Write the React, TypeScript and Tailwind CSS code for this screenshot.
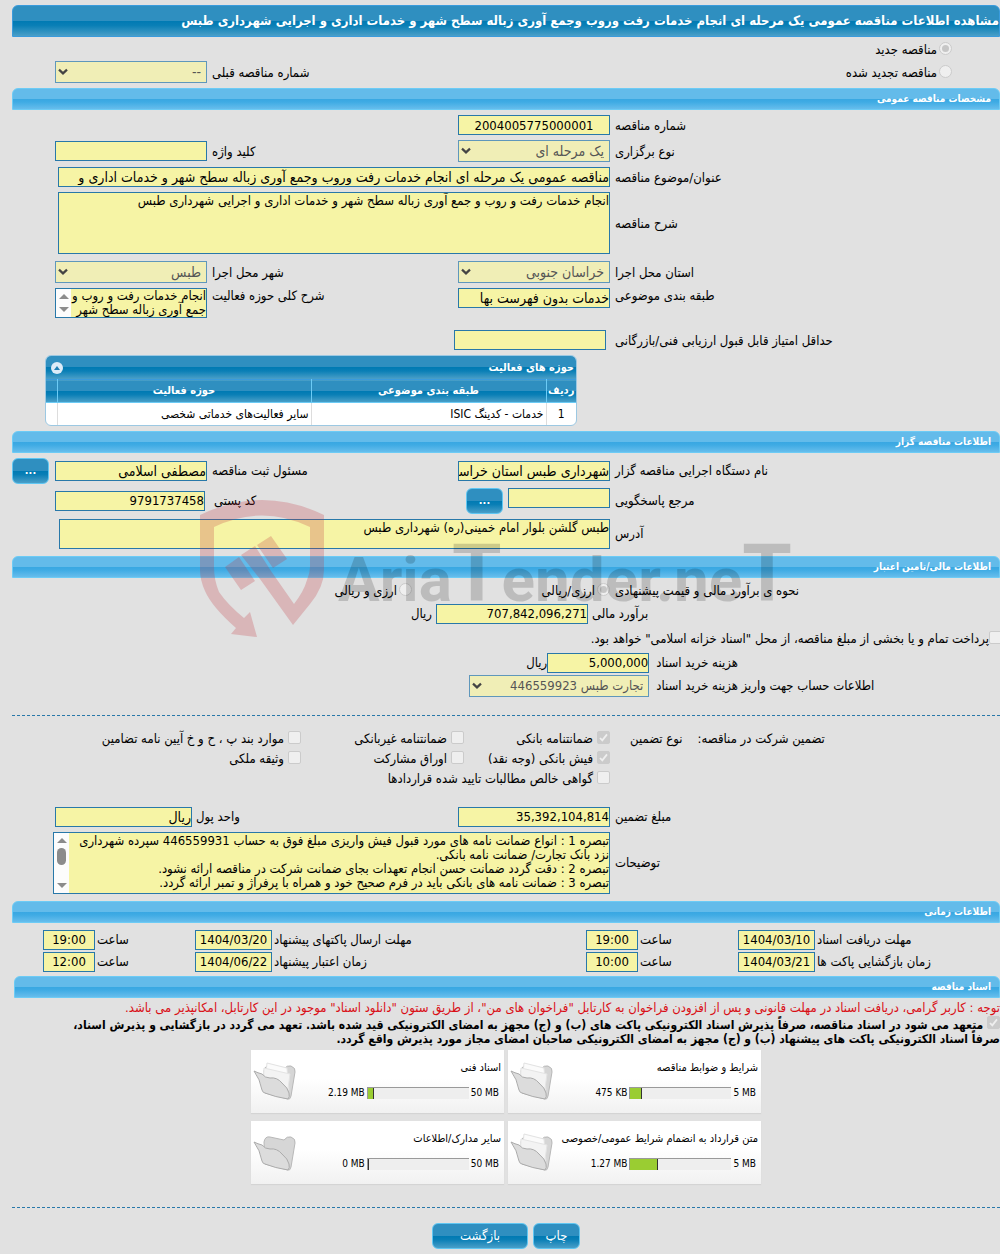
import type { ReactNode } from "react";

const FORM_GRID = "grid grid-cols-[390fr_152px_251fr_152px_43px] items-center";
const DATE_GRID =
  "grid grid-cols-[185fr_77px_100px_52px_314fr_77px_100px_52px_31px] items-center h-5";
const CHECK_GRID = "grid grid-cols-[390fr_146fr_163fr_289fr] items-center h-5";
const DARK =
  "bg-[linear-gradient(#2f8fc0_0%,#2f8fc0_50%,#007ab3_50%,#0a7fb6_65%,#4a9fc8_100%)]";
const LIGHT =
  "bg-[linear-gradient(#63bbea_0%,#63bbea_50%,#38a7e2_50%,#3fabe4_65%,#66bdec_100%)]";
const BOX = "border border-[#2878a9] bg-[#f6f4a5] text-black";

function SectionBar({ title, className = "" }: { title: string; className?: string }) {
  return (
    <h2
      className={`flex h-[22px] items-center rounded-t-md border border-[#6ccbf5] px-2 text-[10px] font-bold text-white ${LIGHT} ${className}`}
    >
      {title}
    </h2>
  );
}

function Label({
  id,
  children,
  pad = "pl-[5px]",
  className = "",
}: {
  id: string;
  children: ReactNode;
  pad?: string;
  className?: string;
}) {
  return (
    <label htmlFor={id} className={`pt-px text-left whitespace-nowrap ${pad} ${className}`}>
      {children}
    </label>
  );
}

function TextBox({
  id,
  value = "",
  size = "text-[14px]",
  className = "",
}: {
  id: string;
  value?: string;
  size?: string;
  className?: string;
}) {
  return (
    <input
      id={id}
      type="text"
      readOnly
      value={value}
      className={`block h-5 w-full min-w-0 leading-[18px] outline-none ${size} ${BOX} ${className}`}
    />
  );
}

function Select({ id, value, size = "text-[14px]" }: { id: string; value: string; size?: string }) {
  return (
    <div className="relative w-full">
      <select
        id={id}
        disabled
        className={`block h-[22px] w-full appearance-none border border-[#5f97bb] bg-[#f0eeb6] pr-[5px] pl-5 leading-5 text-[#555] opacity-100 ${size}`}
      >
        <option>{value}</option>
      </select>
      <svg className="pointer-events-none absolute top-[7px] left-[3px]" width="10" height="8" viewBox="0 0 10 8">
        <path d="M1 1.6 5 5.4 9 1.6" fill="none" stroke="#444" strokeWidth="2.2" />
      </svg>
    </div>
  );
}

function ScrollTrack({ thumb = false }: { thumb?: boolean }) {
  return (
    <div className="flex w-[15px] shrink-0 flex-col items-center justify-between bg-[#fcfcfc] py-[5px]">
      <svg width="10" height="5" viewBox="0 0 10 5">
        <path d="M0 5 5 0l5 5z" fill="#8b8b8b" />
      </svg>
      {thumb && <div className="mb-3 h-[17px] w-[9px] rounded-full bg-[#8b8b8b]" />}
      <svg width="10" height="5" viewBox="0 0 10 5">
        <path d="M0 0 5 5l5-5z" fill="#8b8b8b" />
      </svg>
    </div>
  );
}

function MarkBox({ type, name, checked = false }: { type: "radio" | "checkbox"; name?: string; checked?: boolean }) {
  return (
    <span className="relative inline-block h-[13px] w-[13px] shrink-0">
      <input
        type={type}
        name={name}
        defaultChecked={checked}
        disabled
        className={`block h-[13px] w-[13px] appearance-none border border-[#cbcbcb] bg-[#efefef] ${
          type === "radio" ? "rounded-full" : "rounded-[2px] checked:bg-[#cbcbcb]"
        }`}
      />
      {checked && type === "radio" && (
        <span className="absolute top-[3px] left-[3px] h-[7px] w-[7px] rounded-full bg-[#c6c6c6]" />
      )}
      {checked && type === "checkbox" && (
        <svg className="absolute top-0 left-0" width="13" height="13" viewBox="0 0 13 13">
          <path d="M3 7 5.3 9.4 10 3.4" fill="none" stroke="#efefef" strokeWidth="1.8" />
        </svg>
      )}
    </span>
  );
}

function Mark({
  type,
  name,
  checked = false,
  gap = "gap-1",
  children,
}: {
  type: "radio" | "checkbox";
  name?: string;
  checked?: boolean;
  gap?: string;
  children: ReactNode;
}) {
  return (
    <label className={`flex items-start whitespace-nowrap ${gap}`}>
      <MarkBox type={type} name={name} checked={checked} />
      <span className="pt-px">{children}</span>
    </label>
  );
}

function GlossButton({ className = "", label, children }: { className?: string; label?: string; children: ReactNode }) {
  return (
    <button
      type="button"
      aria-label={label}
      className={`h-[26px] rounded-md border border-[#5fc6f2] text-white ${DARK} ${className}`}
    >
      {children}
    </button>
  );
}

function Folder({ full }: { full: boolean }) {
  return (
    <svg width="44" height="40" viewBox="0 0 44 40" className="shrink-0">
      <path
        d="M11 9Q12 3 17 4L31 7Q34 3 38 4Q43 6 42 10L38 34Q37 38 35 37L12 31Z"
        fill="#d6d6d6"
        stroke="#b8b8b8"
      />
      {full && (
        <>
          <path d="M14 1 34 6 36 28 12 20Z" fill="#fbfbfb" stroke="#e2e2e2" />
          <path d="M11 6 37 12 34 34 10 28Z" fill="#f3f3f3" stroke="#e4e4e4" />
        </>
      )}
      <path
        d="M1 9Q5 11 9 12Q12 16 17 16Q24 15 29 21Q35 26 36 31Q37 35 35 37Q22 35 12 31Q10 31 9 28Q7 17 1 9Z"
        fill="#dcdcdc"
        stroke="#ababab"
      />
    </svg>
  );
}

const files = [
  { title: "شرایط و ضوابط مناقصه", used: "475 KB", max: "5 MB", percent: 11, full: true },
  { title: "اسناد فنی", used: "2.19 MB", max: "50 MB", percent: 6, full: true },
  { title: "متن قرارداد به انضمام شرایط عمومی/خصوصی", used: "1.27 MB", max: "5 MB", percent: 27, full: true },
  { title: "سایر مدارک/اطلاعات", used: "0 MB", max: "50 MB", percent: 1, full: false },
];

function FileCard({ file }: { file: (typeof files)[number] }) {
  return (
    <div className="flex h-[63px] justify-between bg-[linear-gradient(#fff_0%,#fff_45%,#f1f1f1_100%)] text-[10px] shadow-[0_1px_1px_#d4d4d4]">
      <div className="flex flex-1 flex-col pt-[10px] pr-[3px]">
        <p className="text-[11px] leading-4 whitespace-nowrap">{file.title}</p>
        <div className="mt-[10px] flex items-center">
          <span className="px-[2px]" dir="ltr">{file.max}</span>
          <div className="h-3 w-[102px] border-t border-l border-[#999] bg-[#eee]" dir="ltr">
            <div
              className={`h-full border-r border-[#333] ${file.percent > 1 ? "bg-[#9acd32]" : ""}`}
              style={{ width: `${file.percent}%` }}
            />
          </div>
          <span className="mr-[2px]" dir="ltr">{file.used}</span>
        </div>
      </div>
      <div className="w-[46px] pt-3">
        <Folder full={file.full} />
      </div>
    </div>
  );
}

function Watermark() {
  return (
    <svg
      className="pointer-events-none absolute top-[495px] left-[20%]"
      width="610"
      height="150"
      viewBox="0 0 610 150"
      direction="ltr"
      aria-hidden="true"
    >
      <g fill="#c0303a" opacity="0.24">
        <path d="M0 20Q62-10 124 20V75Q124 92 110 109L93 130 60 84 41 60 55 51 71 76 94 109Q104 96 107 85Q110 78 110 72V32Q62 9 14 32V72Q14 85 19 97Q28 110 44 123L50 117 57 142 31 139 36 133Q12 112 5 96Q0 85 0 75Z" />
        <path d="M25 72 39 62 55 86 41 95ZM57 50 71 41 87 64 73 73Z" />
      </g>
      <text
        x="138"
        y="106"
        fill="#000"
        opacity="0.16"
        className="font-[Roboto,'Liberation_Sans',sans-serif] text-[62px] font-bold"
      >
        Aria<tspan fontSize="80">T</tspan>ender.ne<tspan fontSize="80">T</tspan>
      </text>
    </svg>
  );
}

const dates = [
  ["مهلت دریافت اسناد", "1404/03/10", "19:00", "مهلت ارسال پاکتهای پیشنهاد", "1404/03/20", "19:00"],
  ["زمان بازگشایی پاکت ها", "1404/03/21", "10:00", "زمان اعتبار پیشنهاد", "1404/06/22", "12:00"],
];

export default function App() {
  return (
    <main
      dir="rtl"
      className="relative min-h-screen overflow-hidden bg-[#e1e1e1] pt-[5px] pb-[5px] pl-3 font-['DejaVu_Sans_Condensed','DejaVu_Sans',sans-serif] text-[13px] leading-[14px] text-black"
    >
      <h1
        className={`flex h-8 items-center overflow-hidden rounded-t-md border border-[#3a9bdc] text-[13px] font-bold whitespace-nowrap text-white ${DARK}`}
      >
        مشاهده اطلاعات مناقصه عمومی یک مرحله ای انجام خدمات رفت وروب وجمع آوری زباله سطح شهر و خدمات اداری و اجرایی شهرداری طبس
      </h1>

      <div className="mt-px flex h-[22px] items-center pr-12">
        <Mark type="radio" name="kind" checked gap="gap-[2px]">مناقصه جدید</Mark>
      </div>
      <div className={`mt-px ${FORM_GRID}`}>
        <div className="col-span-2 pr-12">
          <Mark type="radio" name="kind" gap="gap-[2px]">مناقصه تجدید شده</Mark>
        </div>
        <Label id="prev">شماره مناقصه قبلی</Label>
        <Select id="prev" value="--" />
      </div>

      <SectionBar title="مشخصات مناقصه عمومی" className="mt-[5px]" />
      <div className={`mt-[5px] ${FORM_GRID}`}>
        <Label id="number">شماره مناقصه</Label>
        <TextBox id="number" value="2004005775000001" size="text-[13px]" className="text-center" />
      </div>
      <div className={`mt-[5px] ${FORM_GRID}`}>
        <Label id="type">نوع برگزاری</Label>
        <Select id="type" value="یک مرحله ای" />
        <Label id="keyword">کلید واژه</Label>
        <TextBox id="keyword" />
      </div>
      <div className={`mt-[5px] ${FORM_GRID}`}>
        <Label id="subject">عنوان/موضوع مناقصه</Label>
        <div className="col-span-3 pl-[3px]">
          <TextBox
            id="subject"
            value="مناقصه عمومی یک مرحله ای انجام خدمات رفت وروب وجمع آوری زباله سطح شهر و خدمات اداری و"
          />
        </div>
      </div>
      <div className={`mt-[5px] ${FORM_GRID}`}>
        <Label id="desc">شرح مناقصه</Label>
        <div className="col-span-3 pl-[3px]">
          <textarea
            id="desc"
            readOnly
            className={`block h-[62px] w-full resize-none overflow-hidden pt-px outline-none ${BOX}`}
            value="انجام خدمات رفت و روب و جمع آوری زباله سطح شهر و خدمات اداری و اجرایی شهرداری طبس"
          />
        </div>
      </div>
      <div className={`mt-[7px] ${FORM_GRID}`}>
        <Label id="province">استان محل اجرا</Label>
        <Select id="province" value="خراسان جنوبی" />
        <Label id="city">شهر محل اجرا</Label>
        <Select id="city" value="طبس" />
      </div>
      <div className={`mt-[5px] ${FORM_GRID}`}>
        <Label id="category" className="self-start">طبقه بندی موضوعی</Label>
        <TextBox id="category" value="خدمات بدون فهرست بها" className="self-start" />
        <Label id="field" className="self-start">شرح کلی حوزه فعالیت</Label>
        <div className={`flex h-[30px] ${BOX}`}>
          <textarea
            id="field"
            readOnly
            className="block min-w-0 flex-1 resize-none overflow-hidden outline-none"
            value={"انجام خدمات رفت و روب و\nجمع آوری زباله سطح شهر"}
          />
          <ScrollTrack />
        </div>
      </div>
      <div className={`mt-3 ${FORM_GRID}`}>
        <Label id="score">حداقل امتیاز قابل قبول ارزیابی فنی/بازرگانی</Label>
        <div className="mr-1 w-[152px]">
          <TextBox id="score" />
        </div>
      </div>

      <section className="mt-[5px] mr-auto ml-[33px] w-[532px] overflow-hidden rounded-md border border-[#9cc8e2] bg-white">
        <div className={`flex h-[23px] items-center justify-between pr-[2px] pl-[5px] text-[11px] ${DARK}`}>
          <h3 className="font-bold text-white">حوزه های فعالیت</h3>
          <button type="button" aria-label="بستن" className="flex h-3 w-3 items-center justify-center rounded-full bg-[#dcebf8]">
            <svg width="6" height="4" viewBox="0 0 6 4">
              <path d="M0 4 3 0l3 4z" fill="#1f7fb5" />
            </svg>
          </button>
        </div>
        <table className="w-full table-fixed border-collapse text-[11px]">
          <thead>
            <tr className={`h-[23px] border-t border-b border-t-[#3a9bdc] border-b-[#6ccbf5] text-white ${DARK}`}>
              <th className="w-[30px] p-0">ردیف</th>
              <th className="w-[235px] border-r border-[#6ccbf5] p-0">طبقه بندی موضوعی</th>
              <th className="border-r border-[#6ccbf5] p-0">حوزه فعالیت</th>
              <th className="w-[11px] border-r border-[#6ccbf5] p-0" />
            </tr>
          </thead>
          <tbody>
            <tr className="h-[22px] text-[12px]">
              <td className="p-0 text-center">1</td>
              <td className="border-r border-[#ddd] px-[2px] py-0">خدمات - کدینگ ISIC</td>
              <td className="border-r border-[#ddd] px-[2px] py-0">سایر فعالیت‌های خدماتی شخصی</td>
              <td className="border-r border-[#ddd] p-0" />
            </tr>
          </tbody>
        </table>
      </section>

      <SectionBar title="اطلاعات مناقصه گزار" className="mt-[5px]" />
      <div className={`mt-[5px] ${FORM_GRID}`}>
        <Label id="agency">نام دستگاه اجرایی مناقصه گزار</Label>
        <TextBox id="agency" value="شهرداری طبس استان خراسان جنوبی" />
        <Label id="owner">مسئول ثبت مناقصه</Label>
        <TextBox id="owner" value="مصطفی اسلامی" />
        <GlossButton label="انتخاب مسئول" className="mr-auto w-[37px] text-[11px] font-bold">...</GlossButton>
      </div>
      <div className={`mt-1 ${FORM_GRID}`}>
        <Label id="contact">مرجع پاسخگویی</Label>
        <div className="flex items-start gap-[5px]">
          <TextBox id="contact" className="max-w-[102px]" />
          <GlossButton label="انتخاب مرجع" className="w-[37px] shrink-0 text-[11px] font-bold">...</GlossButton>
        </div>
        <Label id="postal" pad="pl-[7px]">کد پستی</Label>
        <div className="pr-[2px]">
          <TextBox id="postal" value="9791737458" size="text-[13px]" />
        </div>
      </div>
      <div className={`mt-[5px] ${FORM_GRID}`}>
        <Label id="address">آدرس</Label>
        <div className="col-span-3 pl-1">
          <textarea
            id="address"
            readOnly
            className={`block h-[30px] w-full resize-none overflow-hidden pt-px outline-none ${BOX}`}
            value="طبس گلشن بلوار امام خمینی(ره) شهرداری طبس"
          />
        </div>
      </div>

      <SectionBar title="اطلاعات مالی/تامین اعتبار" className="mt-[7px]" />
      <div className="mt-[3px] grid h-5 grid-cols-[390fr_198fr_400fr] items-center">
        <span className="pl-[5px] text-left">نحوه ی برآورد مالی و قیمت پیشنهادی</span>
        <Mark type="radio" name="currency" checked gap="gap-[2px]">ارزی/ریالی</Mark>
        <Mark type="radio" name="currency" gap="gap-[2px]">ارزی و ریالی</Mark>
      </div>
      <div className="mt-[3px] flex items-center">
        <Label id="estimate" pad="pl-1" className="w-[41.7%]">برآورد مالی</Label>
        <div className="w-[152px]">
          <TextBox id="estimate" value="707,842,096,271" size="text-[13px]" />
        </div>
        <span className="mr-1">ريال</span>
      </div>
      <div className="mt-[6px] -mr-[2px] flex h-[18px] items-center">
        <Mark type="checkbox" gap="gap-0">
          پرداخت تمام و یا بخشی از مبلغ مناقصه، از محل "اسناد خزانه اسلامی" خواهد بود.
        </Mark>
      </div>
      <div className="mt-[5px] flex items-center">
        <Label id="docfee" pad="pl-[7px]" className="w-[35.5%]">هزینه خرید اسناد</Label>
        <div className="w-[102px]">
          <TextBox id="docfee" value="5,000,000" size="text-[13px]" />
        </div>
        <span>ریال</span>
      </div>
      <div className="mt-[2px] flex items-center">
        <Label id="account" pad="pl-[7px]" className="w-[35.5%]">اطلاعات حساب جهت واریز هزینه خرید اسناد</Label>
        <div className="w-[180px]">
          <Select id="account" value="تجارت طبس 446559923" size="text-[13px]" />
        </div>
      </div>

      <hr className="mt-[18px] border-t border-dashed border-[#2878a9]" />

      <div className={`mt-[13px] ${CHECK_GRID}`}>
        <div className="flex justify-end gap-[15px] pl-5">
          <span>تضمین شرکت در مناقصه:</span>
          <span>نوع تضمین</span>
        </div>
        <Mark type="checkbox" checked>ضمانتنامه بانکی</Mark>
        <Mark type="checkbox">ضمانتنامه غیربانکی</Mark>
        <Mark type="checkbox">موارد بند پ ، ح و خ آیین نامه تضامین</Mark>
      </div>
      <div className={CHECK_GRID}>
        <span />
        <Mark type="checkbox" checked>فیش بانکی (وجه نقد)</Mark>
        <Mark type="checkbox">اوراق مشارکت</Mark>
        <Mark type="checkbox">وثیقه ملکی</Mark>
      </div>
      <div className={CHECK_GRID}>
        <span />
        <div className="col-span-2">
          <Mark type="checkbox">گواهی خالص مطالبات تایید شده قراردادها</Mark>
        </div>
      </div>
      <div className="mt-[18px] grid grid-cols-[390fr_152px_266fr_137px_43px] items-center">
        <Label id="guarantee">مبلغ تضمین</Label>
        <TextBox id="guarantee" value="35,392,104,814" size="text-[13px]" />
        <Label id="unit" pad="pl-1">واحد پول</Label>
        <TextBox id="unit" value="ریال" />
      </div>
      <div className={`mt-[5px] ${FORM_GRID}`}>
        <Label id="notes">توضیحات</Label>
        <div className={`col-span-3 -ml-[2px] flex h-[62px] ${BOX}`}>
          <textarea
            id="notes"
            readOnly
            className="block min-w-0 flex-1 resize-none overflow-hidden pt-px outline-none"
            value={
              "تبصره 1 : انواع ضمانت نامه های مورد قبول فیش واریزی مبلغ فوق به حساب 446559931 سپرده شهرداری\nنزد بانک تجارت/ ضمانت نامه بانکی.\nتبصره 2 : دقت گردد ضمانت حسن انجام تعهدات بجای ضمانت شرکت در مناقصه ارائه نشود.\nتبصره 3 : ضمانت نامه های بانکی باید در فرم صحیح خود و همراه با پرفراژ و تمبر ارائه گردد."
            }
          />
          <ScrollTrack thumb />
        </div>
      </div>

      <SectionBar title="اطلاعات زمانی" className="mt-[7px]" />
      <div className="mt-[7px] flex flex-col gap-[2px]">
        {dates.map(([first, day, hour, second, day2, hour2], i) => (
          <div key={first} className={DATE_GRID}>
            <Label id={`a${i}`} pad="pl-[2px]">{first}</Label>
            <TextBox id={`a${i}`} value={day} size="text-[13px]" className="text-center" />
            <Label id={`b${i}`} pad="pl-[2px]">ساعت</Label>
            <TextBox id={`b${i}`} value={hour} size="text-[13px]" className="text-center" />
            <Label id={`c${i}`} pad="pl-[2px]">{second}</Label>
            <TextBox id={`c${i}`} value={day2} size="text-[13px]" className="text-center" />
            <Label id={`d${i}`} pad="pl-[2px]">ساعت</Label>
            <TextBox id={`d${i}`} value={hour2} size="text-[13px]" className="text-center" />
          </div>
        ))}
      </div>

      <SectionBar title="اسناد مناقصه" className="mt-1 ml-[2px]" />
      <p className="mt-[2px] h-4 leading-4 whitespace-nowrap text-[#d90f16]">
        توجه : کاربر گرامی، دریافت اسناد در مهلت قانونی و پس از افزودن فراخوان به کارتابل "فراخوان های من"، از طریق ستون "دانلود اسناد" موجود در این کارتابل، امکانپذیر می باشد.
      </p>
      <label className="block h-[30px] text-[12px] font-bold">
        <MarkBox type="checkbox" checked /> متعهد می شود در اسناد مناقصه، صرفاً پذیرش اسناد الکترونیکی پاکت های (ب) و (ج) مجهز به امضای الکترونیکی قید شده باشد. تعهد می گردد در بازگشایی و پذیرش اسناد،
        <br />
        صرفاً اسناد الکترونیکی پاکت های پیشنهاد (ب) و (ج) مجهز به امضای الکترونیکی صاحبان امضای مجاز مورد پذیرش واقع گردد.
      </label>

      <div className="mt-1 grid grid-cols-[253px_253px] justify-center gap-x-1 gap-y-2">
        {files.map((file) => (
          <FileCard key={file.title} file={file} />
        ))}
      </div>

      <hr className="mt-[23px] border-t border-dashed border-[#2878a9]" />
      <div className="mt-[15px] flex justify-center gap-[5px]">
        <GlossButton className="w-[47px]">چاپ</GlossButton>
        <GlossButton className="w-24">بازگشت</GlossButton>
      </div>

      <Watermark />
    </main>
  );
}
